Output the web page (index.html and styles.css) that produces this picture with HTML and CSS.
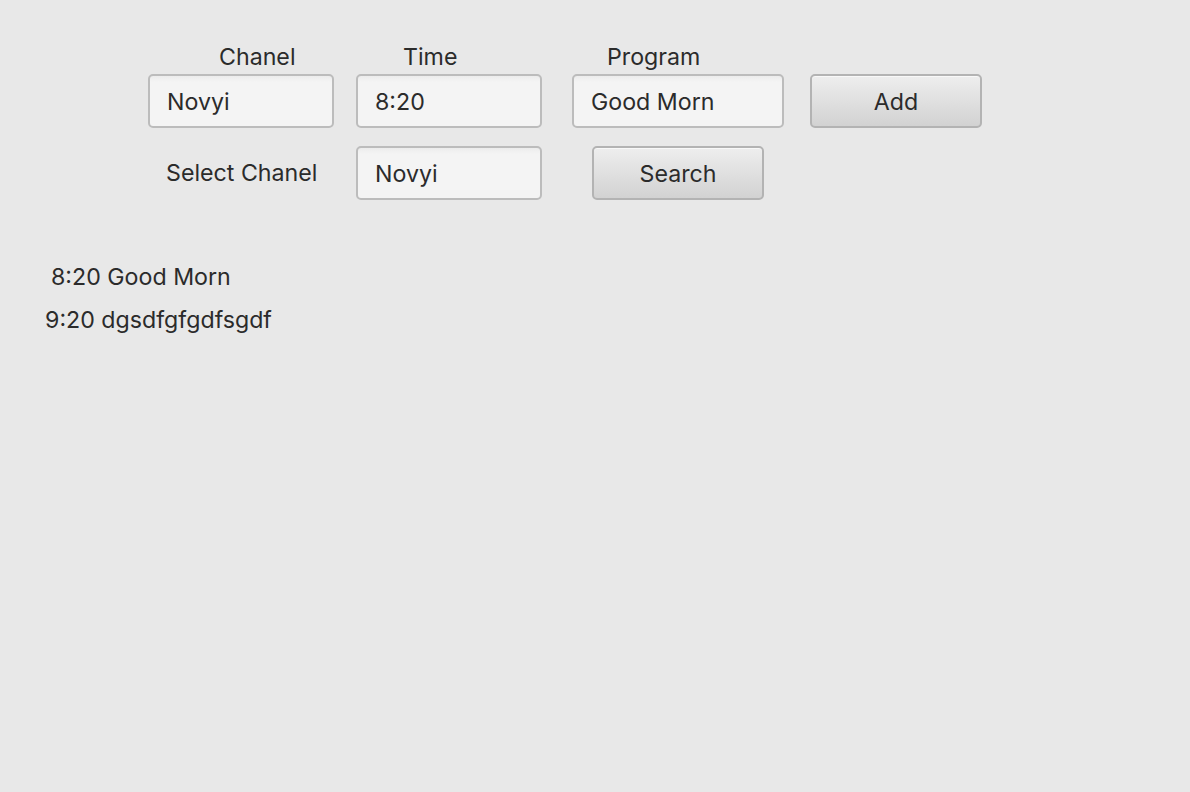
FILE: index.html
```html
<!DOCTYPE html>
<html>
<head>
<meta charset="utf-8">
<link rel="stylesheet" href="styles.css">
</head>
<body>
<div class="app">
  <div class="form">
    <div class="lbl lbl-chanel">Chanel</div>
    <div class="lbl lbl-time">Time</div>
    <div class="lbl lbl-program">Program</div>
    <div></div>

    <div class="field w186">Novyi</div>
    <div class="field w186">8:20</div>
    <div class="field w212">Good Morn</div>
    <div class="btn w172">Add</div>

    <div class="row-label second">Select Chanel</div>
    <div class="field w186 second">Novyi</div>
    <div class="btn w172 btn-search second">Search</div>
    <div></div>
  </div>
  <div class="list">
    <div class="item item-first">8:20 Good Morn</div>
    <div class="item">9:20 dgsdfgfgdfsgdf</div>
  </div>
</div>
</body>
</html>
```
FILE: styles.css
```css
html, body {
  margin: 0;
  padding: 0;
  background: #e8e8e8;
}
body {
  width: 1190px;
  height: 792px;
  overflow: hidden;
  font-family: "Inter", "Liberation Sans", sans-serif;
  font-size: 23.2px;
  color: #2b2b2b;
}
.app {
  padding-top: 42px;
}
.form {
  display: grid;
  grid-template-columns: 208px 216px 238px 172px;
  grid-template-rows: 32px 54px auto;
  margin-left: 148px;
}
.second {
  margin-top: 18px;
}
.w186 { width: 186px; }
.w212 { width: 212px; }
.w172 { width: 172px; }
.lbl {
  line-height: 30px;
  white-space: nowrap;
}
.lbl-chanel { padding-left: 71px; }
.lbl-time { padding-left: 47px; }
.lbl-program { padding-left: 35px; }
.field {
  box-sizing: border-box;
  height: 54px;
  border: 2px solid #bcbcbc;
  border-radius: 5px;
  background: linear-gradient(#ececec, #f4f4f4 6px, #f4f4f4);
  padding-left: 17px;
  line-height: 52px;
  white-space: nowrap;
}
.btn {
  box-sizing: border-box;
  height: 54px;
  border: 2px solid #b3b3b3;
  border-radius: 5px;
  background: linear-gradient(#eeeeee, #d2d2d2);
  box-shadow: inset 0 1px 0 #f8f8f8;
  text-align: center;
  line-height: 52px;
  white-space: nowrap;
}
.btn-search {
  margin-left: 20px;
}
.row-label {
  padding-left: 18px;
  height: 54px;
  line-height: 54px;
  white-space: nowrap;
}
.list {
  margin-top: 56px;
  padding-left: 45px;
}
.item {
  line-height: 43px;
  white-space: nowrap;
}
.item-first {
  padding-left: 6px;
}
```
